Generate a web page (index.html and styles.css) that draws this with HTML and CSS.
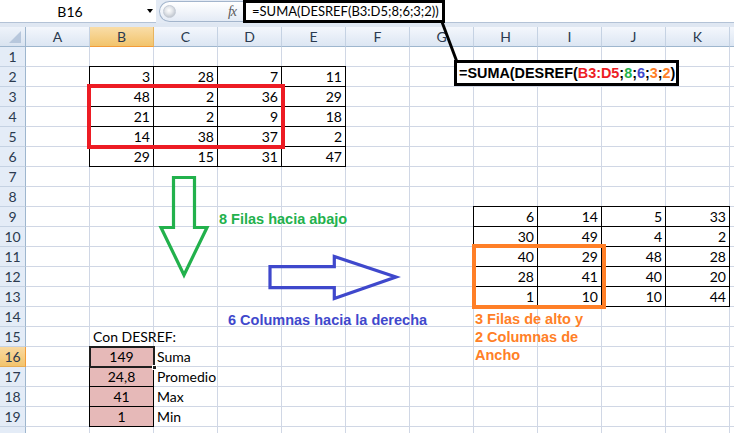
FILE: index.html
```html
<!DOCTYPE html>
<html lang="es">
<head>
<meta charset="utf-8">
<title>DESREF</title>
<link rel="stylesheet" href="styles.css">
</head>
<body>
<div class="app">
  <div class="fbar">
    <div class="namebox"><span class="ref">B16</span><span class="dd"></span></div>
    <div class="pill"><span class="knob"></span><span class="fx">fx</span></div>
    <div class="finput"><span class="fbox">=SUMA(DESREF(B3:D5;8;6;3;2))</span></div>
  </div>
  <div class="band"></div>
  <div class="colhdr">
    <div class="corner"><svg width="25" height="19" viewBox="0 0 25 19"><polygon points="21,4 21,16 9,16" fill="#b7c7dc"/></svg></div>
    <div class="ch">A</div><div class="ch sel">B</div><div class="ch">C</div><div class="ch">D</div><div class="ch">E</div><div class="ch">F</div><div class="ch">G</div><div class="ch">H</div><div class="ch">I</div><div class="ch">J</div><div class="ch">K</div><div class="ch"></div>
  </div>
  <div class="body">
    <div class="rowhdr">
      <div class="rh">1</div><div class="rh">2</div><div class="rh">3</div><div class="rh">4</div><div class="rh">5</div><div class="rh">6</div><div class="rh">7</div><div class="rh">8</div><div class="rh">9</div><div class="rh">10</div><div class="rh">11</div><div class="rh">12</div><div class="rh">13</div><div class="rh">14</div><div class="rh">15</div><div class="rh sel">16</div><div class="rh">17</div><div class="rh">18</div><div class="rh">19</div><div class="rh"></div>
    </div>
    <div class="grid">
      <div class="tbl t1">
        <div>3</div><div>28</div><div>7</div><div>11</div>
        <div>48</div><div>2</div><div>36</div><div>29</div>
        <div>21</div><div>2</div><div>9</div><div>18</div>
        <div>14</div><div>38</div><div>37</div><div>2</div>
        <div>29</div><div>15</div><div>31</div><div>47</div>
      </div>
      <div class="tbl t2">
        <div>6</div><div>14</div><div>5</div><div>33</div>
        <div>30</div><div>49</div><div>4</div><div>2</div>
        <div>40</div><div>29</div><div>48</div><div>28</div>
        <div>28</div><div>41</div><div>40</div><div>20</div>
        <div>1</div><div>10</div><div>10</div><div>44</div>
      </div>
      <div class="con">Con DESREF:</div>
      <div class="tbl t3">
        <div class="sel">149</div><div>24,8</div><div>41</div><div>1</div>
      </div>
      <div class="lbls">
        <div>Suma</div><div>Promedio</div><div>Max</div><div>Min</div>
      </div>
    </div>
  </div>

  <div class="redbox"></div>
  <div class="orangebox"></div>
  <svg class="shapes" width="734" height="433" viewBox="0 0 734 433">
    <line x1="442" y1="22" x2="457" y2="62" stroke="#000" stroke-width="3"/>
    <polygon points="173.5,177.5 194.5,177.5 194.5,227.5 207,227.5 184,275 161,227.5 173.5,227.5" fill="none" stroke="#22b14c" stroke-width="3.2"/>
    <polygon points="270,266.7 334.3,266.7 334.3,256.5 396,277 334.3,298.5 334.3,287.7 270,287.7" fill="none" stroke="#3f48cc" stroke-width="3.2"/>
  </svg>
  <div class="callout">=SUMA(DESREF(<span class="cr">B3:D5</span>;<span class="cg">8</span>;<span class="cb">6</span>;<span class="co">3</span>;<span class="co">2</span>)</div>
  <div class="ann ann-green">8 Filas hacia abajo</div>
  <div class="ann ann-blue">6 Columnas hacia la derecha</div>
  <div class="ann ann-orange">3 Filas de alto y<br>2 Columnas de<br>Ancho</div>
</div>
</body>
</html>
```

FILE: styles.css
```css
html, body {
  margin: 0;
  padding: 0;
  overflow: hidden;
  background: #fff;
}

.app {
  position: relative;
  width: 734px;
  height: 433px;
  overflow: hidden;
  font-family: Lato, "Liberation Sans", sans-serif;
  font-size: 14px;
  color: #000;
}

/* formula bar */
.fbar {
  display: flex;
  height: 23px;
  background: #e3eaf4;
}

.namebox {
  width: 156px;
  flex: none;
  display: flex;
  align-items: center;
  background: #fff;
  border-bottom: 1px solid #b3c2d6;
  box-sizing: border-box;
}

.namebox .ref {
  width: 140px;
  text-align: center;
}

.dd {
  width: 0;
  height: 0;
  margin-left: 7px;
  border-left: 3.5px solid transparent;
  border-right: 3.5px solid transparent;
  border-top: 4px solid #000;
}

.pill {
  width: 84px;
  height: 21px;
  flex: none;
  margin: 1px 0 0 3px;
  display: flex;
  align-items: center;
  padding-left: 3px;
  box-sizing: border-box;
  border: 1px solid #a3b5cc;
  border-right: none;
  border-radius: 11px 0 0 11px;
  background: linear-gradient(#ffffff, #e4ebf5);
}

.knob {
  width: 13px;
  height: 13px;
  border-radius: 50%;
  background: radial-gradient(circle at 45% 40%, #ffffff 0%, #e3e6ea 40%, #aab2bd 100%);
  border: 1px solid #c5ccd6;
  box-sizing: border-box;
}

.fx {
  margin-left: auto;
  margin-right: 7px;
  font-family: "Liberation Serif", serif;
  font-style: italic;
  font-size: 14px;
  color: #5a5a5a;
  letter-spacing: -1px;
}

.finput {
  flex: 1;
  display: flex;
  background: #fff;
  border-bottom: 1px solid #b3c2d6;
  box-sizing: border-box;
}

.fbox {
  height: 23px;
  box-sizing: border-box;
  border: 3px solid #000;
  padding: 0 3px 0 6px;
  line-height: 17px;
  font-size: 13px;
  white-space: nowrap;
}

.band {
  height: 4px;
  background: #dfe7f2;
}

/* column headers */
.colhdr {
  display: flex;
  height: 20px;
}

.corner {
  width: 26px;
  flex: none;
  box-sizing: border-box;
  border-right: 1px solid #9eb6ce;
  border-bottom: 1px solid #9eb6ce;
  background: linear-gradient(#eef3fa, #d9e3f0);
}

.corner svg {
  display: block;
}

.ch {
  width: 64px;
  flex: none;
  box-sizing: border-box;
  border-right: 1px solid #c5d2e3;
  border-bottom: 1px solid #9eb6ce;
  background: linear-gradient(#f4f7fc, #dce6f3);
  text-align: center;
  line-height: 19px;
  color: #2b3a4f;
}

.ch.sel {
  background: linear-gradient(#f9dda8, #f2c46c);
  border-bottom-color: #f29b3a;
  border-right-color: #e7b45f;
}

/* body */
.body {
  display: flex;
}

.rowhdr {
  width: 26px;
  flex: none;
  display: flex;
  flex-direction: column;
}

.rh {
  height: 20px;
  box-sizing: border-box;
  border-right: 1px solid #9eb6ce;
  border-bottom: 1px solid #c5d2e3;
  background: #e4ecf7;
  text-align: center;
  line-height: 19px;
  color: #2b3a4f;
}

.rh.sel {
  background: linear-gradient(#f9d9a0, #f3c46d);
  border-bottom-color: #e6ad55;
  border-right-color: #f29b3a;
}

.grid {
  flex: none;
  width: 768px;
  display: grid;
  grid-template-columns: repeat(12, 64px);
  grid-template-rows: repeat(20, 20px);
  background-image:
    linear-gradient(to left, #d0d7e5 1px, transparent 1px),
    linear-gradient(to top, #d0d7e5 1px, transparent 1px);
  background-size: 64px 20px;
}

.tbl {
  display: grid;
  margin: -1px 0 0 -1px;
  border-left: 1px solid #000;
  border-top: 1px solid #000;
  background: #fff;
}

.tbl > div {
  border-right: 1px solid #000;
  border-bottom: 1px solid #000;
  text-align: right;
  padding-right: 3px;
  line-height: 19px;
}

.t1 {
  grid-column: 2 / 6;
  grid-row: 2 / 7;
  grid-template-columns: repeat(4, 1fr);
  grid-template-rows: repeat(5, 1fr);
}

.t2 {
  grid-column: 8 / 12;
  grid-row: 9 / 14;
  grid-template-columns: repeat(4, 1fr);
  grid-template-rows: repeat(5, 1fr);
}

.t3 {
  grid-column: 2;
  grid-row: 16 / 20;
  grid-template-rows: repeat(4, 1fr);
  background: #e6b9b8;
}

.t3 > div {
  text-align: center;
  padding: 0;
}

.t3 > .sel {
  position: relative;
  outline: 2px solid #1e1e1e;
  outline-offset: -1px;
}

.t3 > .sel::after {
  content: "";
  position: absolute;
  right: -4px;
  bottom: -4px;
  width: 5px;
  height: 5px;
  background: #1e1e1e;
  border: 1px solid #fff;
  box-sizing: border-box;
}

.con {
  grid-column: 2 / 4;
  grid-row: 15;
  padding-left: 3px;
  line-height: 19px;
  white-space: nowrap;
}

.lbls {
  grid-column: 3;
  grid-row: 16 / 20;
  display: grid;
  grid-template-rows: repeat(4, 1fr);
}

.lbls > div {
  padding-left: 3px;
  line-height: 19px;
  white-space: nowrap;
}

/* annotations drawn over the sheet */
.redbox {
  position: absolute;
  left: 87px;
  top: 84px;
  width: 198px;
  height: 65px;
  box-sizing: border-box;
  border: 4px solid #ed1c24;
}

.orangebox {
  position: absolute;
  left: 472px;
  top: 244px;
  width: 134px;
  height: 65px;
  box-sizing: border-box;
  border: 4px solid #ff7f27;
}

.shapes {
  position: absolute;
  left: 0;
  top: 0;
}

.callout {
  position: absolute;
  left: 454px;
  top: 60px;
  width: 225px;
  height: 26px;
  box-sizing: border-box;
  border: 3px solid #000;
  background: #fff;
  padding-left: 2px;
  font-family: "Liberation Sans", Arial, sans-serif;
  font-weight: bold;
  font-size: 14.4px;
  line-height: 20px;
  white-space: nowrap;
}

.cr { color: #ed1c24; }
.cg { color: #22b14c; }
.cb { color: #3f48cc; }
.co { color: #ff7f27; }

.ann {
  position: absolute;
  font-family: "Liberation Sans", Arial, sans-serif;
  font-weight: bold;
  font-size: 14.5px;
  line-height: 18px;
  white-space: nowrap;
}

.ann-green {
  left: 219px;
  top: 210px;
  color: #22b14c;
}

.ann-blue {
  left: 228px;
  top: 311px;
  color: #3f48cc;
}

.ann-orange {
  left: 475px;
  top: 310px;
  color: #ff7f27;
}
```
